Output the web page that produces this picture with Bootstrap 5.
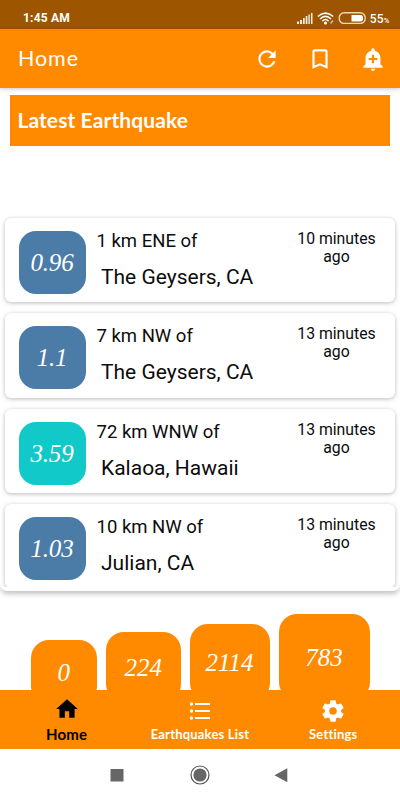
<!DOCTYPE html>
<html lang="en">
<head>
<meta charset="utf-8">
<meta name="viewport" content="width=device-width, initial-scale=1">
<title>Home</title>
<link href="https://cdn.jsdelivr.net/npm/bootstrap@5.3.0/dist/css/bootstrap.min.css" rel="stylesheet">
<style>
:root{--brand:#ff8a00}
body{font-family:Roboto,sans-serif;color:#0c0c0c;background:#fff}
.screen{width:400px;height:800px}
.status-bar{height:29px;background:#9e5500;padding:8px 10.5px 0 23px;font-size:11.5px;line-height:20px}
.status-bar .clock{font-weight:700;font-size:12px;letter-spacing:.2px;line-height:21px}
.status-bar svg,.app-bar svg,.tabs svg{display:block;flex:none}
.pct{font-size:12px;font-weight:500;letter-spacing:.2px;line-height:22px}
.pct small{font-size:7.5px}
.app-bar{height:59px;background:var(--brand);box-shadow:0 1px 4px rgba(0,0,0,.22);padding:0 14px 0 18px}
.app-title{font:400 21.5px/59px Lato,sans-serif;letter-spacing:.9px}
.app-icons{gap:27px}
.headline{margin:7px 10.4px 0;height:51px;background:var(--brand);padding-left:7px;font:700 21px/50px Lato,sans-serif;letter-spacing:.1px}
.list-sheet{height:381px;margin-top:64px;padding-bottom:4px;border-radius:0 0 7px 7px;box-shadow:0 4px 5px -1px rgba(0,0,0,.24);clip-path:inset(0 0 -14px 0)}
.list-clip{height:377px;padding:8px 5.5px 0 5px}
.quake{height:84.3px;margin-bottom:11px;border-radius:6px;box-shadow:0 1px 4px rgba(0,0,0,.28);padding:13px 13px 0 13.5px}
.mag{width:67px;height:63px;border-radius:17px;background:#4b7ba7;font:italic 400 25px/64px "Liberation Serif",serif;letter-spacing:-.2px}
.mag.strong{background:#12c9c9}
.place{margin-left:11px;margin-top:-2px}
.dist{font-size:18.5px;line-height:24px}
.town{font-size:21px;line-height:26px;margin:11px 0 0 4.5px;letter-spacing:0}
.ago{font-size:15.8px;line-height:18px;width:90px;letter-spacing:0;margin-top:-1px}
.counts{height:99px;padding-left:30.5px;gap:9px}
.count{background:var(--brand);border-radius:18px;font:italic 400 25px/1 "Liberation Serif",serif;flex:none}
.c1{width:66.5px;height:64px;margin-top:49px}
.c2{width:74.5px;height:70px;margin-top:41px}
.c3{width:80px;height:77px;margin-top:33px}
.c4{width:91px;height:86px;margin-top:23px}
.tabs{height:59px;background:var(--brand);font:700 13px/16px Lato,sans-serif;letter-spacing:.2px;font-variant-ligatures:none}
.tab{width:133.3px}
.tab-home{padding-top:6px;gap:4px}
.tab-list{padding-top:9px;gap:1px}
.tab-settings{padding-top:8px;gap:2px}
.tab.current{font-size:15px;color:#000}
.system{height:51px;color:#666}
</style>
</head>
<body>
<div class="screen d-flex flex-column overflow-hidden">
  <div class="status-bar d-flex justify-content-between text-white flex-shrink-0">
    <span class="clock">1:45 AM</span>
    <span class="d-flex">
      <svg class="mt-1" width="16" height="12" viewBox="0 0 16 12" fill="#fff" opacity=".9"><path d="M0 9.500h2V12H0zM3 8h2v4H3zM6 6h1.700v6H6zM8.700 4h1.700v8H8.700zM11.400 2.500h1.400V12h-1.400zM14 1h1.500v11H14z"/></svg>
      <svg class="ms-1" width="17" height="18" viewBox="1 0 17 18" fill="none" stroke="#fff" stroke-width="1.500"><path d="M1.800 8.500Q9.500 1.800 17.200 8.500M4 11Q9.500 5.800 15 11M6.400 13.200Q9.500 10 12.600 13.200"/><circle cx="9.500" cy="15" r=".8" fill="#fff"/><path d="M14.500 15.500l2.500-3" opacity=".6"/></svg>
      <svg class="ms-1" width="28" height="16" viewBox="0 0 28 16"><rect x="1.200" y="4.800" width="26" height="10.700" rx="5" fill="none" stroke="#e9d6c0" stroke-width="1.400"/><path d="M13.500 7h9q2.500 0 2.500 3.200t-2.500 3.300h-9z" fill="#fff"/></svg>
      <span class="pct ms-1">55<small>%</small></span>
    </span>
  </div>
  <header class="app-bar d-flex justify-content-between align-items-center text-white flex-shrink-0 position-relative">
    <span class="app-title">Home</span>
    <span class="app-icons d-flex align-items-center">
      <svg width="26" height="26" viewBox="0 0 24 24" fill="#fff"><path d="M17.650 6.350A7.960 7.960 0 0 0 12 4a8 8 0 1 0 7.730 10h-2.080A6 6 0 1 1 12 6c1.660 0 3.140.69 4.220 1.780L13 11h7V4z"/></svg>
      <svg width="26" height="26" viewBox="0 0 24 24" fill="#fff"><path d="M17 3H7c-1.100 0-2 .9-2 2v16l7-3 7 3V5c0-1.100-.9-2-2-2zm0 15l-5-2.180L7 18V5h10z"/></svg>
      <svg width="26" height="26" viewBox="0 0 24 24" fill="#fff"><path d="M10.010 21.010c0 1.100.89 1.990 1.990 1.990s1.990-.89 1.990-1.990h-3.980zM18.880 16.820V11c0-3.250-2.250-5.970-5.290-6.690v-.720C13.590 2.710 12.880 2 12 2s-1.590.710-1.590 1.590v.720C7.370 5.030 5.120 7.750 5.120 11v5.820L3 18.940V20h18v-1.060zM16 13.010h-3v3h-2v-3H8V11h3V8h2v3h3z"/></svg>
    </span>
  </header>
  <h1 class="headline text-white flex-shrink-0">Latest Earthquake</h1>
  <section class="list-sheet flex-shrink-0">
    <div class="list-clip overflow-hidden">
      <article class="quake d-flex"><div class="mag text-white text-center">0.96</div><div class="place"><div class="dist">1 km ENE of</div><div class="town">The Geysers, CA</div></div><div class="ago text-center ms-auto">10 minutes ago</div></article>
      <article class="quake d-flex"><div class="mag text-white text-center">1.1</div><div class="place"><div class="dist">7 km NW of</div><div class="town">The Geysers, CA</div></div><div class="ago text-center ms-auto">13 minutes ago</div></article>
      <article class="quake d-flex"><div class="mag strong text-white text-center">3.59</div><div class="place"><div class="dist">72 km WNW of</div><div class="town">Kalaoa, Hawaii</div></div><div class="ago text-center ms-auto">13 minutes ago</div></article>
      <article class="quake d-flex"><div class="mag text-white text-center">1.03</div><div class="place"><div class="dist">10 km NW of</div><div class="town">Julian, CA</div></div><div class="ago text-center ms-auto">13 minutes ago</div></article>
    </div>
  </section>
  <section class="counts d-flex align-items-start overflow-hidden flex-shrink-0 text-white">
    <div class="count c1 d-flex align-items-center justify-content-center">0</div>
    <div class="count c2 d-flex align-items-center justify-content-center">224</div>
    <div class="count c3 d-flex align-items-center justify-content-center">2114</div>
    <div class="count c4 d-flex align-items-center justify-content-center">783</div>
  </section>
  <nav class="tabs d-flex flex-shrink-0 text-white">
    <div class="tab tab-home current d-flex flex-column align-items-center"><svg width="26" height="26" viewBox="0 0 24 24"><path d="M10 20v-6h4v6h5v-8h3L12 3 2 12h3v8z"/></svg><span>Home</span></div>
    <div class="tab tab-list d-flex flex-column align-items-center"><svg width="26" height="26" viewBox="0 0 26 26" fill="#fff"><path d="M8 4h15v2H8zM8 11h15v2H8zM8 18h15v2H8z"/><circle cx="4.500" cy="5" r="1.700"/><circle cx="4.500" cy="12" r="1.700"/><circle cx="4.500" cy="19" r="1.700"/></svg><span>Earthquakes List</span></div>
    <div class="tab tab-settings d-flex flex-column align-items-center"><svg width="26" height="26" viewBox="0 0 24 24" fill="#fff"><path d="M19.430 12.980c.04-.32.07-.64.07-.98s-.03-.66-.07-.98l2.110-1.650c.19-.15.24-.42.12-.64l-2-3.460c-.12-.22-.39-.3-.61-.22l-2.490 1c-.52-.4-1.080-.73-1.690-.98l-.38-2.650A.488.488 0 0 0 14 2h-4c-.25 0-.46.18-.49.42l-.38 2.650c-.61.25-1.170.59-1.690.98l-2.490-1c-.23-.09-.49 0-.61.22l-2 3.460c-.13.22-.07.49.12.64l2.110 1.650c-.04.32-.07.65-.07.98s.03.66.07.98l-2.110 1.650c-.19.15-.24.42-.12.64l2 3.460c.12.22.39.3.61.22l2.490-1c.52.4 1.080.73 1.690.98l.38 2.650c.03.24.24.42.49.42h4c.25 0 .46-.18.49-.42l.38-2.650c.61-.25 1.170-.59 1.690-.98l2.490 1c.23.09.49 0 .61-.22l2-3.460c.12-.22.07-.49-.12-.64zM12 15.500a3.500 3.500 0 1 1 0-7 3.500 3.500 0 0 1 0 7z"/></svg><span>Settings</span></div>
  </nav>
  <div class="system d-flex align-items-center justify-content-center flex-shrink-0">
    <svg width="180" height="20" viewBox="0 0 180 20" fill="#666"><path d="M0.500 4h13v12.500h-13zM177.300 3.300v14L164.500 10.300z"/><circle cx="90" cy="10" r="9" fill="none" stroke="#555" stroke-width="1.200"/><circle cx="90" cy="10" r="6.600"/></svg>
  </div>
</div>
<script src="https://cdn.jsdelivr.net/npm/bootstrap@5.3.0/dist/js/bootstrap.bundle.min.js"></script>
</body>
</html>
